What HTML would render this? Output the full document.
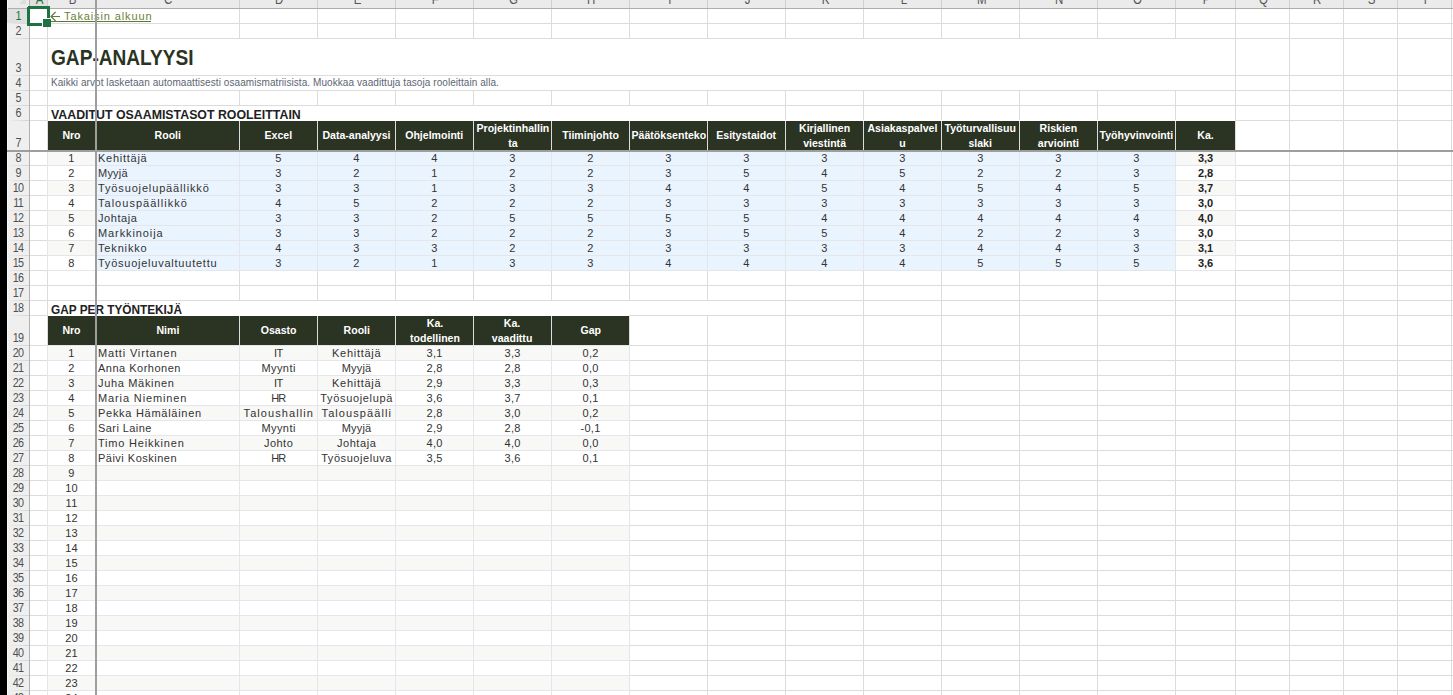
<!DOCTYPE html>
<html><head><meta charset="utf-8"><title>GAP-analyysi</title><style>
html,body{margin:0;padding:0;background:#fff;}
body{width:1453px;height:695px;overflow:hidden;position:relative;font-family:"Liberation Sans", sans-serif;}
#s{position:absolute;left:0;top:0;width:1453px;height:695px;overflow:hidden;background:#fff;}
#s>div{position:absolute;}
.t{white-space:nowrap;}
.h{display:flex;align-items:center;justify-content:center;text-align:center;color:#fff;font-weight:700;font-size:11px;line-height:15px;white-space:nowrap;}
.h span{display:inline-block;transform:scaleX(.96);}
.rn{left:7px;width:22px;height:15px;}
.rn span{position:absolute;left:50%;bottom:1px;font-size:48px;line-height:60px;letter-spacing:-3px;white-space:nowrap;transform:translateX(-50%) translateX(.1px) scale(.225,.25);transform-origin:50% 100%;}
</style></head><body><div id="s">
<div style="left:48px;top:151px;width:47px;height:14px;background:#f8f8f6;"></div>
<div style="left:1176px;top:151px;width:59px;height:14px;background:#f8f8f6;"></div>
<div style="left:96px;top:151px;width:1079px;height:14px;background:#eaf4ff;"></div>
<div style="left:96px;top:166px;width:1079px;height:14px;background:#eaf4ff;"></div>
<div style="left:48px;top:181px;width:47px;height:14px;background:#f8f8f6;"></div>
<div style="left:1176px;top:181px;width:59px;height:14px;background:#f8f8f6;"></div>
<div style="left:96px;top:181px;width:1079px;height:14px;background:#eaf4ff;"></div>
<div style="left:96px;top:196px;width:1079px;height:14px;background:#eaf4ff;"></div>
<div style="left:48px;top:211px;width:47px;height:14px;background:#f8f8f6;"></div>
<div style="left:1176px;top:211px;width:59px;height:14px;background:#f8f8f6;"></div>
<div style="left:96px;top:211px;width:1079px;height:14px;background:#eaf4ff;"></div>
<div style="left:96px;top:226px;width:1079px;height:14px;background:#eaf4ff;"></div>
<div style="left:48px;top:241px;width:47px;height:14px;background:#f8f8f6;"></div>
<div style="left:1176px;top:241px;width:59px;height:14px;background:#f8f8f6;"></div>
<div style="left:96px;top:241px;width:1079px;height:14px;background:#eaf4ff;"></div>
<div style="left:96px;top:256px;width:1079px;height:14px;background:#eaf4ff;"></div>
<div style="left:48px;top:346px;width:581px;height:14px;background:#f8f8f6;"></div>
<div style="left:48px;top:376px;width:581px;height:14px;background:#f8f8f6;"></div>
<div style="left:48px;top:406px;width:581px;height:14px;background:#f8f8f6;"></div>
<div style="left:48px;top:436px;width:581px;height:14px;background:#f8f8f6;"></div>
<div style="left:48px;top:466px;width:581px;height:14px;background:#f8f8f6;"></div>
<div style="left:48px;top:496px;width:581px;height:14px;background:#f8f8f6;"></div>
<div style="left:48px;top:526px;width:581px;height:14px;background:#f8f8f6;"></div>
<div style="left:48px;top:556px;width:581px;height:14px;background:#f8f8f6;"></div>
<div style="left:48px;top:586px;width:581px;height:14px;background:#f8f8f6;"></div>
<div style="left:48px;top:616px;width:581px;height:14px;background:#f8f8f6;"></div>
<div style="left:48px;top:646px;width:581px;height:14px;background:#f8f8f6;"></div>
<div style="left:48px;top:676px;width:581px;height:14px;background:#f8f8f6;"></div>
<div style="left:47px;top:9px;width:1px;height:695px;background:#dcdcdc;"></div>
<div style="left:95px;top:9px;width:1px;height:695px;background:#dcdcdc;"></div>
<div style="left:239px;top:9px;width:1px;height:695px;background:#dcdcdc;"></div>
<div style="left:317px;top:9px;width:1px;height:695px;background:#dcdcdc;"></div>
<div style="left:395px;top:9px;width:1px;height:695px;background:#dcdcdc;"></div>
<div style="left:473px;top:9px;width:1px;height:695px;background:#dcdcdc;"></div>
<div style="left:551px;top:9px;width:1px;height:695px;background:#dcdcdc;"></div>
<div style="left:629px;top:9px;width:1px;height:695px;background:#dcdcdc;"></div>
<div style="left:707px;top:9px;width:1px;height:695px;background:#dcdcdc;"></div>
<div style="left:785px;top:9px;width:1px;height:695px;background:#dcdcdc;"></div>
<div style="left:863px;top:9px;width:1px;height:695px;background:#dcdcdc;"></div>
<div style="left:941px;top:9px;width:1px;height:695px;background:#dcdcdc;"></div>
<div style="left:1019px;top:9px;width:1px;height:695px;background:#dcdcdc;"></div>
<div style="left:1097px;top:9px;width:1px;height:695px;background:#dcdcdc;"></div>
<div style="left:1175px;top:9px;width:1px;height:695px;background:#dcdcdc;"></div>
<div style="left:1235px;top:9px;width:1px;height:695px;background:#dcdcdc;"></div>
<div style="left:1289px;top:9px;width:1px;height:695px;background:#dcdcdc;"></div>
<div style="left:1343px;top:9px;width:1px;height:695px;background:#dcdcdc;"></div>
<div style="left:1397px;top:9px;width:1px;height:695px;background:#dcdcdc;"></div>
<div style="left:1451px;top:9px;width:1px;height:695px;background:#dcdcdc;"></div>
<div style="left:30px;top:23px;width:1453px;height:1px;background:#dcdcdc;"></div>
<div style="left:30px;top:38px;width:1453px;height:1px;background:#dcdcdc;"></div>
<div style="left:30px;top:75px;width:1453px;height:1px;background:#dcdcdc;"></div>
<div style="left:30px;top:90px;width:1453px;height:1px;background:#dcdcdc;"></div>
<div style="left:30px;top:105px;width:1453px;height:1px;background:#dcdcdc;"></div>
<div style="left:30px;top:120px;width:1453px;height:1px;background:#dcdcdc;"></div>
<div style="left:30px;top:150px;width:1453px;height:1px;background:#dcdcdc;"></div>
<div style="left:30px;top:165px;width:1453px;height:1px;background:#dcdcdc;"></div>
<div style="left:30px;top:180px;width:1453px;height:1px;background:#dcdcdc;"></div>
<div style="left:30px;top:195px;width:1453px;height:1px;background:#dcdcdc;"></div>
<div style="left:30px;top:210px;width:1453px;height:1px;background:#dcdcdc;"></div>
<div style="left:30px;top:225px;width:1453px;height:1px;background:#dcdcdc;"></div>
<div style="left:30px;top:240px;width:1453px;height:1px;background:#dcdcdc;"></div>
<div style="left:30px;top:255px;width:1453px;height:1px;background:#dcdcdc;"></div>
<div style="left:30px;top:270px;width:1453px;height:1px;background:#dcdcdc;"></div>
<div style="left:30px;top:285px;width:1453px;height:1px;background:#dcdcdc;"></div>
<div style="left:30px;top:300px;width:1453px;height:1px;background:#dcdcdc;"></div>
<div style="left:30px;top:315px;width:1453px;height:1px;background:#dcdcdc;"></div>
<div style="left:30px;top:345px;width:1453px;height:1px;background:#dcdcdc;"></div>
<div style="left:30px;top:360px;width:1453px;height:1px;background:#dcdcdc;"></div>
<div style="left:30px;top:375px;width:1453px;height:1px;background:#dcdcdc;"></div>
<div style="left:30px;top:390px;width:1453px;height:1px;background:#dcdcdc;"></div>
<div style="left:30px;top:405px;width:1453px;height:1px;background:#dcdcdc;"></div>
<div style="left:30px;top:420px;width:1453px;height:1px;background:#dcdcdc;"></div>
<div style="left:30px;top:435px;width:1453px;height:1px;background:#dcdcdc;"></div>
<div style="left:30px;top:450px;width:1453px;height:1px;background:#dcdcdc;"></div>
<div style="left:30px;top:465px;width:1453px;height:1px;background:#dcdcdc;"></div>
<div style="left:30px;top:480px;width:1453px;height:1px;background:#dcdcdc;"></div>
<div style="left:30px;top:495px;width:1453px;height:1px;background:#dcdcdc;"></div>
<div style="left:30px;top:510px;width:1453px;height:1px;background:#dcdcdc;"></div>
<div style="left:30px;top:525px;width:1453px;height:1px;background:#dcdcdc;"></div>
<div style="left:30px;top:540px;width:1453px;height:1px;background:#dcdcdc;"></div>
<div style="left:30px;top:555px;width:1453px;height:1px;background:#dcdcdc;"></div>
<div style="left:30px;top:570px;width:1453px;height:1px;background:#dcdcdc;"></div>
<div style="left:30px;top:585px;width:1453px;height:1px;background:#dcdcdc;"></div>
<div style="left:30px;top:600px;width:1453px;height:1px;background:#dcdcdc;"></div>
<div style="left:30px;top:615px;width:1453px;height:1px;background:#dcdcdc;"></div>
<div style="left:30px;top:630px;width:1453px;height:1px;background:#dcdcdc;"></div>
<div style="left:30px;top:645px;width:1453px;height:1px;background:#dcdcdc;"></div>
<div style="left:30px;top:660px;width:1453px;height:1px;background:#dcdcdc;"></div>
<div style="left:30px;top:675px;width:1453px;height:1px;background:#dcdcdc;"></div>
<div style="left:30px;top:690px;width:1453px;height:1px;background:#dcdcdc;"></div>
<div style="left:30px;top:705px;width:1453px;height:1px;background:#dcdcdc;"></div>
<div style="left:30px;top:720px;width:1453px;height:1px;background:#dcdcdc;"></div>
<div style="left:47px;top:150px;width:1px;height:121px;background:#e4e6ea;"></div>
<div style="left:95px;top:150px;width:1px;height:121px;background:#e4e6ea;"></div>
<div style="left:239px;top:150px;width:1px;height:121px;background:#e4e6ea;"></div>
<div style="left:317px;top:150px;width:1px;height:121px;background:#e4e6ea;"></div>
<div style="left:395px;top:150px;width:1px;height:121px;background:#e4e6ea;"></div>
<div style="left:473px;top:150px;width:1px;height:121px;background:#e4e6ea;"></div>
<div style="left:551px;top:150px;width:1px;height:121px;background:#e4e6ea;"></div>
<div style="left:629px;top:150px;width:1px;height:121px;background:#e4e6ea;"></div>
<div style="left:707px;top:150px;width:1px;height:121px;background:#e4e6ea;"></div>
<div style="left:785px;top:150px;width:1px;height:121px;background:#e4e6ea;"></div>
<div style="left:863px;top:150px;width:1px;height:121px;background:#e4e6ea;"></div>
<div style="left:941px;top:150px;width:1px;height:121px;background:#e4e6ea;"></div>
<div style="left:1019px;top:150px;width:1px;height:121px;background:#e4e6ea;"></div>
<div style="left:1097px;top:150px;width:1px;height:121px;background:#e4e6ea;"></div>
<div style="left:1175px;top:150px;width:1px;height:121px;background:#e4e6ea;"></div>
<div style="left:1235px;top:150px;width:1px;height:121px;background:#e4e6ea;"></div>
<div style="left:47px;top:150px;width:1189px;height:1px;background:#e4e6ea;"></div>
<div style="left:47px;top:165px;width:1189px;height:1px;background:#e4e6ea;"></div>
<div style="left:47px;top:180px;width:1189px;height:1px;background:#e4e6ea;"></div>
<div style="left:47px;top:195px;width:1189px;height:1px;background:#e4e6ea;"></div>
<div style="left:47px;top:210px;width:1189px;height:1px;background:#e4e6ea;"></div>
<div style="left:47px;top:225px;width:1189px;height:1px;background:#e4e6ea;"></div>
<div style="left:47px;top:240px;width:1189px;height:1px;background:#e4e6ea;"></div>
<div style="left:47px;top:255px;width:1189px;height:1px;background:#e4e6ea;"></div>
<div style="left:47px;top:270px;width:1189px;height:1px;background:#e4e6ea;"></div>
<div style="left:47px;top:345px;width:1px;height:351px;background:#e4e6ea;"></div>
<div style="left:95px;top:345px;width:1px;height:351px;background:#e4e6ea;"></div>
<div style="left:239px;top:345px;width:1px;height:351px;background:#e4e6ea;"></div>
<div style="left:317px;top:345px;width:1px;height:351px;background:#e4e6ea;"></div>
<div style="left:395px;top:345px;width:1px;height:351px;background:#e4e6ea;"></div>
<div style="left:473px;top:345px;width:1px;height:351px;background:#e4e6ea;"></div>
<div style="left:551px;top:345px;width:1px;height:351px;background:#e4e6ea;"></div>
<div style="left:629px;top:345px;width:1px;height:351px;background:#e4e6ea;"></div>
<div style="left:47px;top:345px;width:583px;height:1px;background:#e4e6ea;"></div>
<div style="left:47px;top:360px;width:583px;height:1px;background:#e4e6ea;"></div>
<div style="left:47px;top:375px;width:583px;height:1px;background:#e4e6ea;"></div>
<div style="left:47px;top:390px;width:583px;height:1px;background:#e4e6ea;"></div>
<div style="left:47px;top:405px;width:583px;height:1px;background:#e4e6ea;"></div>
<div style="left:47px;top:420px;width:583px;height:1px;background:#e4e6ea;"></div>
<div style="left:47px;top:435px;width:583px;height:1px;background:#e4e6ea;"></div>
<div style="left:47px;top:450px;width:583px;height:1px;background:#e4e6ea;"></div>
<div style="left:47px;top:465px;width:583px;height:1px;background:#e4e6ea;"></div>
<div style="left:47px;top:480px;width:583px;height:1px;background:#e4e6ea;"></div>
<div style="left:47px;top:495px;width:583px;height:1px;background:#e4e6ea;"></div>
<div style="left:47px;top:510px;width:583px;height:1px;background:#e4e6ea;"></div>
<div style="left:47px;top:525px;width:583px;height:1px;background:#e4e6ea;"></div>
<div style="left:47px;top:540px;width:583px;height:1px;background:#e4e6ea;"></div>
<div style="left:47px;top:555px;width:583px;height:1px;background:#e4e6ea;"></div>
<div style="left:47px;top:570px;width:583px;height:1px;background:#e4e6ea;"></div>
<div style="left:47px;top:585px;width:583px;height:1px;background:#e4e6ea;"></div>
<div style="left:47px;top:600px;width:583px;height:1px;background:#e4e6ea;"></div>
<div style="left:47px;top:615px;width:583px;height:1px;background:#e4e6ea;"></div>
<div style="left:47px;top:630px;width:583px;height:1px;background:#e4e6ea;"></div>
<div style="left:47px;top:645px;width:583px;height:1px;background:#e4e6ea;"></div>
<div style="left:47px;top:660px;width:583px;height:1px;background:#e4e6ea;"></div>
<div style="left:47px;top:675px;width:583px;height:1px;background:#e4e6ea;"></div>
<div style="left:47px;top:690px;width:583px;height:1px;background:#e4e6ea;"></div>
<div style="left:48px;top:39px;width:1187px;height:36px;background:#fff;"></div>
<div style="left:48px;top:76px;width:1187px;height:14px;background:#fff;"></div>
<div style="left:48px;top:106px;width:737px;height:14px;background:#fff;"></div>
<div style="left:48px;top:301px;width:737px;height:14px;background:#fff;"></div>
<div style="left:48px;top:120px;width:1187px;height:1px;background:#fff;"></div>
<div style="left:48px;top:121px;width:47px;height:29px;background:#2b3423;"></div>
<div style="left:96px;top:121px;width:143px;height:29px;background:#2b3423;"></div>
<div style="left:240px;top:121px;width:77px;height:29px;background:#2b3423;"></div>
<div style="left:318px;top:121px;width:77px;height:29px;background:#2b3423;"></div>
<div style="left:396px;top:121px;width:77px;height:29px;background:#2b3423;"></div>
<div style="left:474px;top:121px;width:77px;height:29px;background:#2b3423;"></div>
<div style="left:552px;top:121px;width:77px;height:29px;background:#2b3423;"></div>
<div style="left:630px;top:121px;width:77px;height:29px;background:#2b3423;"></div>
<div style="left:708px;top:121px;width:77px;height:29px;background:#2b3423;"></div>
<div style="left:786px;top:121px;width:77px;height:29px;background:#2b3423;"></div>
<div style="left:864px;top:121px;width:77px;height:29px;background:#2b3423;"></div>
<div style="left:942px;top:121px;width:77px;height:29px;background:#2b3423;"></div>
<div style="left:1020px;top:121px;width:77px;height:29px;background:#2b3423;"></div>
<div style="left:1098px;top:121px;width:77px;height:29px;background:#2b3423;"></div>
<div style="left:1176px;top:121px;width:59px;height:29px;background:#2b3423;"></div>
<div style="left:48px;top:315px;width:581px;height:1px;background:#fff;"></div>
<div style="left:48px;top:316px;width:47px;height:29px;background:#2b3423;"></div>
<div style="left:96px;top:316px;width:143px;height:29px;background:#2b3423;"></div>
<div style="left:240px;top:316px;width:77px;height:29px;background:#2b3423;"></div>
<div style="left:318px;top:316px;width:77px;height:29px;background:#2b3423;"></div>
<div style="left:396px;top:316px;width:77px;height:29px;background:#2b3423;"></div>
<div style="left:474px;top:316px;width:77px;height:29px;background:#2b3423;"></div>
<div style="left:552px;top:316px;width:77px;height:29px;background:#2b3423;"></div>
<svg style="position:absolute;left:50px;top:11px" width="11" height="11" viewBox="0 0 11 11"><path d="M1 5.5H10M5.6 1L1 5.5L5.6 10" fill="none" stroke="#61793a" stroke-width="1.15"/></svg>
<div class="t" style="left:64px;top:9px;height:14px;line-height:15px;font-size:11px;letter-spacing:.88px;color:#6a7f3d;">Takaisin alkuun</div>
<div style="left:51px;top:21px;width:100px;height:1px;background:#5a7a3a;"></div>
<div class="t" style="left:51px;top:46px;font-size:22px;line-height:24px;font-weight:700;color:#2b3423;transform-origin:0 0;transform:scaleX(.868);">GAP-ANALYYSI</div>
<div class="t" style="left:51px;top:76px;font-size:10px;line-height:14px;letter-spacing:.07px;color:#5d6573;">Kaikki arvot lasketaan automaattisesti osaamismatriisista. Muokkaa vaadittuja tasoja rooleittain alla.</div>
<div class="t" style="left:51px;top:107px;font-size:13px;line-height:15px;font-weight:700;color:#222;transform-origin:0 0;transform:scaleX(.95);">VAADITUT OSAAMISTASOT ROOLEITTAIN</div>
<div class="t" style="left:51px;top:302px;font-size:13px;line-height:15px;font-weight:700;color:#222;transform-origin:0 0;transform:scaleX(.908);">GAP PER TYÖNTEKIJÄ</div>
<div class="h" style="left:38px;top:121px;width:67px;height:29px;"><span>Nro</span></div>
<div class="h" style="left:86px;top:121px;width:163px;height:29px;"><span>Rooli</span></div>
<div class="h" style="left:230px;top:121px;width:97px;height:29px;"><span>Excel</span></div>
<div class="h" style="left:308px;top:121px;width:97px;height:29px;"><span>Data-analyysi</span></div>
<div class="h" style="left:386px;top:121px;width:97px;height:29px;"><span>Ohjelmointi</span></div>
<div class="h" style="left:464px;top:121px;width:97px;height:29px;"><span>Projektinhallin<br>ta</span></div>
<div class="h" style="left:542px;top:121px;width:97px;height:29px;"><span>Tiiminjohto</span></div>
<div class="h" style="left:620px;top:121px;width:97px;height:29px;"><span>Päätöksenteko</span></div>
<div class="h" style="left:698px;top:121px;width:97px;height:29px;"><span>Esitystaidot</span></div>
<div class="h" style="left:776px;top:121px;width:97px;height:29px;"><span>Kirjallinen<br>viestintä</span></div>
<div class="h" style="left:854px;top:121px;width:97px;height:29px;"><span>Asiakaspalvel<br>u</span></div>
<div class="h" style="left:932px;top:121px;width:97px;height:29px;"><span>Työturvallisuu<br>slaki</span></div>
<div class="h" style="left:1010px;top:121px;width:97px;height:29px;"><span>Riskien<br>arviointi</span></div>
<div class="h" style="left:1088px;top:121px;width:97px;height:29px;"><span>Työhyvinvointi</span></div>
<div class="h" style="left:1166px;top:121px;width:79px;height:29px;"><span>Ka.</span></div>
<div class="h" style="left:38px;top:316px;width:67px;height:29px;"><span>Nro</span></div>
<div class="h" style="left:86px;top:316px;width:163px;height:29px;"><span>Nimi</span></div>
<div class="h" style="left:230px;top:316px;width:97px;height:29px;"><span>Osasto</span></div>
<div class="h" style="left:308px;top:316px;width:97px;height:29px;"><span>Rooli</span></div>
<div class="h" style="left:386px;top:316px;width:97px;height:29px;"><span>Ka.<br>todellinen</span></div>
<div class="h" style="left:464px;top:316px;width:97px;height:29px;"><span>Ka.<br>vaadittu</span></div>
<div class="h" style="left:542px;top:316px;width:97px;height:29px;"><span>Gap</span></div>
<div class="t" style="left:48px;top:151px;width:47px;height:14px;line-height:15px;box-sizing:border-box;overflow:hidden;font-size:11px;letter-spacing:.6px;color:#333;text-align:center;letter-spacing:.3px;text-indent:.15px;">1</div>
<div class="t" style="left:96px;top:151px;width:143px;height:14px;line-height:15px;box-sizing:border-box;overflow:hidden;font-size:11px;letter-spacing:.6px;color:#333;text-align:left;letter-spacing:0.736px;padding-left:2px;">Kehittäjä</div>
<div class="t" style="left:240px;top:151px;width:77px;height:14px;line-height:15px;box-sizing:border-box;overflow:hidden;font-size:11px;letter-spacing:.6px;color:#333;text-align:center;letter-spacing:.3px;text-indent:.15px;">5</div>
<div class="t" style="left:318px;top:151px;width:77px;height:14px;line-height:15px;box-sizing:border-box;overflow:hidden;font-size:11px;letter-spacing:.6px;color:#333;text-align:center;letter-spacing:.3px;text-indent:.15px;">4</div>
<div class="t" style="left:396px;top:151px;width:77px;height:14px;line-height:15px;box-sizing:border-box;overflow:hidden;font-size:11px;letter-spacing:.6px;color:#333;text-align:center;letter-spacing:.3px;text-indent:.15px;">4</div>
<div class="t" style="left:474px;top:151px;width:77px;height:14px;line-height:15px;box-sizing:border-box;overflow:hidden;font-size:11px;letter-spacing:.6px;color:#333;text-align:center;letter-spacing:.3px;text-indent:.15px;">3</div>
<div class="t" style="left:552px;top:151px;width:77px;height:14px;line-height:15px;box-sizing:border-box;overflow:hidden;font-size:11px;letter-spacing:.6px;color:#333;text-align:center;letter-spacing:.3px;text-indent:.15px;">2</div>
<div class="t" style="left:630px;top:151px;width:77px;height:14px;line-height:15px;box-sizing:border-box;overflow:hidden;font-size:11px;letter-spacing:.6px;color:#333;text-align:center;letter-spacing:.3px;text-indent:.15px;">3</div>
<div class="t" style="left:708px;top:151px;width:77px;height:14px;line-height:15px;box-sizing:border-box;overflow:hidden;font-size:11px;letter-spacing:.6px;color:#333;text-align:center;letter-spacing:.3px;text-indent:.15px;">3</div>
<div class="t" style="left:786px;top:151px;width:77px;height:14px;line-height:15px;box-sizing:border-box;overflow:hidden;font-size:11px;letter-spacing:.6px;color:#333;text-align:center;letter-spacing:.3px;text-indent:.15px;">3</div>
<div class="t" style="left:864px;top:151px;width:77px;height:14px;line-height:15px;box-sizing:border-box;overflow:hidden;font-size:11px;letter-spacing:.6px;color:#333;text-align:center;letter-spacing:.3px;text-indent:.15px;">3</div>
<div class="t" style="left:942px;top:151px;width:77px;height:14px;line-height:15px;box-sizing:border-box;overflow:hidden;font-size:11px;letter-spacing:.6px;color:#333;text-align:center;letter-spacing:.3px;text-indent:.15px;">3</div>
<div class="t" style="left:1020px;top:151px;width:77px;height:14px;line-height:15px;box-sizing:border-box;overflow:hidden;font-size:11px;letter-spacing:.6px;color:#333;text-align:center;letter-spacing:.3px;text-indent:.15px;">3</div>
<div class="t" style="left:1098px;top:151px;width:77px;height:14px;line-height:15px;box-sizing:border-box;overflow:hidden;font-size:11px;letter-spacing:.6px;color:#333;text-align:center;letter-spacing:.3px;text-indent:.15px;">3</div>
<div class="t" style="left:1176px;top:151px;width:59px;height:14px;line-height:15px;box-sizing:border-box;overflow:hidden;font-size:11px;font-weight:700;color:#222;letter-spacing:-.15px;text-align:center;">3,3</div>
<div class="t" style="left:48px;top:166px;width:47px;height:14px;line-height:15px;box-sizing:border-box;overflow:hidden;font-size:11px;letter-spacing:.6px;color:#333;text-align:center;letter-spacing:.3px;text-indent:.15px;">2</div>
<div class="t" style="left:96px;top:166px;width:143px;height:14px;line-height:15px;box-sizing:border-box;overflow:hidden;font-size:11px;letter-spacing:.6px;color:#333;text-align:left;letter-spacing:0.216px;padding-left:2px;">Myyjä</div>
<div class="t" style="left:240px;top:166px;width:77px;height:14px;line-height:15px;box-sizing:border-box;overflow:hidden;font-size:11px;letter-spacing:.6px;color:#333;text-align:center;letter-spacing:.3px;text-indent:.15px;">3</div>
<div class="t" style="left:318px;top:166px;width:77px;height:14px;line-height:15px;box-sizing:border-box;overflow:hidden;font-size:11px;letter-spacing:.6px;color:#333;text-align:center;letter-spacing:.3px;text-indent:.15px;">2</div>
<div class="t" style="left:396px;top:166px;width:77px;height:14px;line-height:15px;box-sizing:border-box;overflow:hidden;font-size:11px;letter-spacing:.6px;color:#333;text-align:center;letter-spacing:.3px;text-indent:.15px;">1</div>
<div class="t" style="left:474px;top:166px;width:77px;height:14px;line-height:15px;box-sizing:border-box;overflow:hidden;font-size:11px;letter-spacing:.6px;color:#333;text-align:center;letter-spacing:.3px;text-indent:.15px;">2</div>
<div class="t" style="left:552px;top:166px;width:77px;height:14px;line-height:15px;box-sizing:border-box;overflow:hidden;font-size:11px;letter-spacing:.6px;color:#333;text-align:center;letter-spacing:.3px;text-indent:.15px;">2</div>
<div class="t" style="left:630px;top:166px;width:77px;height:14px;line-height:15px;box-sizing:border-box;overflow:hidden;font-size:11px;letter-spacing:.6px;color:#333;text-align:center;letter-spacing:.3px;text-indent:.15px;">3</div>
<div class="t" style="left:708px;top:166px;width:77px;height:14px;line-height:15px;box-sizing:border-box;overflow:hidden;font-size:11px;letter-spacing:.6px;color:#333;text-align:center;letter-spacing:.3px;text-indent:.15px;">5</div>
<div class="t" style="left:786px;top:166px;width:77px;height:14px;line-height:15px;box-sizing:border-box;overflow:hidden;font-size:11px;letter-spacing:.6px;color:#333;text-align:center;letter-spacing:.3px;text-indent:.15px;">4</div>
<div class="t" style="left:864px;top:166px;width:77px;height:14px;line-height:15px;box-sizing:border-box;overflow:hidden;font-size:11px;letter-spacing:.6px;color:#333;text-align:center;letter-spacing:.3px;text-indent:.15px;">5</div>
<div class="t" style="left:942px;top:166px;width:77px;height:14px;line-height:15px;box-sizing:border-box;overflow:hidden;font-size:11px;letter-spacing:.6px;color:#333;text-align:center;letter-spacing:.3px;text-indent:.15px;">2</div>
<div class="t" style="left:1020px;top:166px;width:77px;height:14px;line-height:15px;box-sizing:border-box;overflow:hidden;font-size:11px;letter-spacing:.6px;color:#333;text-align:center;letter-spacing:.3px;text-indent:.15px;">2</div>
<div class="t" style="left:1098px;top:166px;width:77px;height:14px;line-height:15px;box-sizing:border-box;overflow:hidden;font-size:11px;letter-spacing:.6px;color:#333;text-align:center;letter-spacing:.3px;text-indent:.15px;">3</div>
<div class="t" style="left:1176px;top:166px;width:59px;height:14px;line-height:15px;box-sizing:border-box;overflow:hidden;font-size:11px;font-weight:700;color:#222;letter-spacing:-.15px;text-align:center;">2,8</div>
<div class="t" style="left:48px;top:181px;width:47px;height:14px;line-height:15px;box-sizing:border-box;overflow:hidden;font-size:11px;letter-spacing:.6px;color:#333;text-align:center;letter-spacing:.3px;text-indent:.15px;">3</div>
<div class="t" style="left:96px;top:181px;width:143px;height:14px;line-height:15px;box-sizing:border-box;overflow:hidden;font-size:11px;letter-spacing:.6px;color:#333;text-align:left;letter-spacing:0.856px;padding-left:2px;">Työsuojelupäällikkö</div>
<div class="t" style="left:240px;top:181px;width:77px;height:14px;line-height:15px;box-sizing:border-box;overflow:hidden;font-size:11px;letter-spacing:.6px;color:#333;text-align:center;letter-spacing:.3px;text-indent:.15px;">3</div>
<div class="t" style="left:318px;top:181px;width:77px;height:14px;line-height:15px;box-sizing:border-box;overflow:hidden;font-size:11px;letter-spacing:.6px;color:#333;text-align:center;letter-spacing:.3px;text-indent:.15px;">3</div>
<div class="t" style="left:396px;top:181px;width:77px;height:14px;line-height:15px;box-sizing:border-box;overflow:hidden;font-size:11px;letter-spacing:.6px;color:#333;text-align:center;letter-spacing:.3px;text-indent:.15px;">1</div>
<div class="t" style="left:474px;top:181px;width:77px;height:14px;line-height:15px;box-sizing:border-box;overflow:hidden;font-size:11px;letter-spacing:.6px;color:#333;text-align:center;letter-spacing:.3px;text-indent:.15px;">3</div>
<div class="t" style="left:552px;top:181px;width:77px;height:14px;line-height:15px;box-sizing:border-box;overflow:hidden;font-size:11px;letter-spacing:.6px;color:#333;text-align:center;letter-spacing:.3px;text-indent:.15px;">3</div>
<div class="t" style="left:630px;top:181px;width:77px;height:14px;line-height:15px;box-sizing:border-box;overflow:hidden;font-size:11px;letter-spacing:.6px;color:#333;text-align:center;letter-spacing:.3px;text-indent:.15px;">4</div>
<div class="t" style="left:708px;top:181px;width:77px;height:14px;line-height:15px;box-sizing:border-box;overflow:hidden;font-size:11px;letter-spacing:.6px;color:#333;text-align:center;letter-spacing:.3px;text-indent:.15px;">4</div>
<div class="t" style="left:786px;top:181px;width:77px;height:14px;line-height:15px;box-sizing:border-box;overflow:hidden;font-size:11px;letter-spacing:.6px;color:#333;text-align:center;letter-spacing:.3px;text-indent:.15px;">5</div>
<div class="t" style="left:864px;top:181px;width:77px;height:14px;line-height:15px;box-sizing:border-box;overflow:hidden;font-size:11px;letter-spacing:.6px;color:#333;text-align:center;letter-spacing:.3px;text-indent:.15px;">4</div>
<div class="t" style="left:942px;top:181px;width:77px;height:14px;line-height:15px;box-sizing:border-box;overflow:hidden;font-size:11px;letter-spacing:.6px;color:#333;text-align:center;letter-spacing:.3px;text-indent:.15px;">5</div>
<div class="t" style="left:1020px;top:181px;width:77px;height:14px;line-height:15px;box-sizing:border-box;overflow:hidden;font-size:11px;letter-spacing:.6px;color:#333;text-align:center;letter-spacing:.3px;text-indent:.15px;">4</div>
<div class="t" style="left:1098px;top:181px;width:77px;height:14px;line-height:15px;box-sizing:border-box;overflow:hidden;font-size:11px;letter-spacing:.6px;color:#333;text-align:center;letter-spacing:.3px;text-indent:.15px;">5</div>
<div class="t" style="left:1176px;top:181px;width:59px;height:14px;line-height:15px;box-sizing:border-box;overflow:hidden;font-size:11px;font-weight:700;color:#222;letter-spacing:-.15px;text-align:center;">3,7</div>
<div class="t" style="left:48px;top:196px;width:47px;height:14px;line-height:15px;box-sizing:border-box;overflow:hidden;font-size:11px;letter-spacing:.6px;color:#333;text-align:center;letter-spacing:.3px;text-indent:.15px;">4</div>
<div class="t" style="left:96px;top:196px;width:143px;height:14px;line-height:15px;box-sizing:border-box;overflow:hidden;font-size:11px;letter-spacing:.6px;color:#333;text-align:left;letter-spacing:1.021px;padding-left:2px;">Talouspäällikkö</div>
<div class="t" style="left:240px;top:196px;width:77px;height:14px;line-height:15px;box-sizing:border-box;overflow:hidden;font-size:11px;letter-spacing:.6px;color:#333;text-align:center;letter-spacing:.3px;text-indent:.15px;">4</div>
<div class="t" style="left:318px;top:196px;width:77px;height:14px;line-height:15px;box-sizing:border-box;overflow:hidden;font-size:11px;letter-spacing:.6px;color:#333;text-align:center;letter-spacing:.3px;text-indent:.15px;">5</div>
<div class="t" style="left:396px;top:196px;width:77px;height:14px;line-height:15px;box-sizing:border-box;overflow:hidden;font-size:11px;letter-spacing:.6px;color:#333;text-align:center;letter-spacing:.3px;text-indent:.15px;">2</div>
<div class="t" style="left:474px;top:196px;width:77px;height:14px;line-height:15px;box-sizing:border-box;overflow:hidden;font-size:11px;letter-spacing:.6px;color:#333;text-align:center;letter-spacing:.3px;text-indent:.15px;">2</div>
<div class="t" style="left:552px;top:196px;width:77px;height:14px;line-height:15px;box-sizing:border-box;overflow:hidden;font-size:11px;letter-spacing:.6px;color:#333;text-align:center;letter-spacing:.3px;text-indent:.15px;">2</div>
<div class="t" style="left:630px;top:196px;width:77px;height:14px;line-height:15px;box-sizing:border-box;overflow:hidden;font-size:11px;letter-spacing:.6px;color:#333;text-align:center;letter-spacing:.3px;text-indent:.15px;">3</div>
<div class="t" style="left:708px;top:196px;width:77px;height:14px;line-height:15px;box-sizing:border-box;overflow:hidden;font-size:11px;letter-spacing:.6px;color:#333;text-align:center;letter-spacing:.3px;text-indent:.15px;">3</div>
<div class="t" style="left:786px;top:196px;width:77px;height:14px;line-height:15px;box-sizing:border-box;overflow:hidden;font-size:11px;letter-spacing:.6px;color:#333;text-align:center;letter-spacing:.3px;text-indent:.15px;">3</div>
<div class="t" style="left:864px;top:196px;width:77px;height:14px;line-height:15px;box-sizing:border-box;overflow:hidden;font-size:11px;letter-spacing:.6px;color:#333;text-align:center;letter-spacing:.3px;text-indent:.15px;">3</div>
<div class="t" style="left:942px;top:196px;width:77px;height:14px;line-height:15px;box-sizing:border-box;overflow:hidden;font-size:11px;letter-spacing:.6px;color:#333;text-align:center;letter-spacing:.3px;text-indent:.15px;">3</div>
<div class="t" style="left:1020px;top:196px;width:77px;height:14px;line-height:15px;box-sizing:border-box;overflow:hidden;font-size:11px;letter-spacing:.6px;color:#333;text-align:center;letter-spacing:.3px;text-indent:.15px;">3</div>
<div class="t" style="left:1098px;top:196px;width:77px;height:14px;line-height:15px;box-sizing:border-box;overflow:hidden;font-size:11px;letter-spacing:.6px;color:#333;text-align:center;letter-spacing:.3px;text-indent:.15px;">3</div>
<div class="t" style="left:1176px;top:196px;width:59px;height:14px;line-height:15px;box-sizing:border-box;overflow:hidden;font-size:11px;font-weight:700;color:#222;letter-spacing:-.15px;text-align:center;">3,0</div>
<div class="t" style="left:48px;top:211px;width:47px;height:14px;line-height:15px;box-sizing:border-box;overflow:hidden;font-size:11px;letter-spacing:.6px;color:#333;text-align:center;letter-spacing:.3px;text-indent:.15px;">5</div>
<div class="t" style="left:96px;top:211px;width:143px;height:14px;line-height:15px;box-sizing:border-box;overflow:hidden;font-size:11px;letter-spacing:.6px;color:#333;text-align:left;letter-spacing:0.569px;padding-left:2px;">Johtaja</div>
<div class="t" style="left:240px;top:211px;width:77px;height:14px;line-height:15px;box-sizing:border-box;overflow:hidden;font-size:11px;letter-spacing:.6px;color:#333;text-align:center;letter-spacing:.3px;text-indent:.15px;">3</div>
<div class="t" style="left:318px;top:211px;width:77px;height:14px;line-height:15px;box-sizing:border-box;overflow:hidden;font-size:11px;letter-spacing:.6px;color:#333;text-align:center;letter-spacing:.3px;text-indent:.15px;">3</div>
<div class="t" style="left:396px;top:211px;width:77px;height:14px;line-height:15px;box-sizing:border-box;overflow:hidden;font-size:11px;letter-spacing:.6px;color:#333;text-align:center;letter-spacing:.3px;text-indent:.15px;">2</div>
<div class="t" style="left:474px;top:211px;width:77px;height:14px;line-height:15px;box-sizing:border-box;overflow:hidden;font-size:11px;letter-spacing:.6px;color:#333;text-align:center;letter-spacing:.3px;text-indent:.15px;">5</div>
<div class="t" style="left:552px;top:211px;width:77px;height:14px;line-height:15px;box-sizing:border-box;overflow:hidden;font-size:11px;letter-spacing:.6px;color:#333;text-align:center;letter-spacing:.3px;text-indent:.15px;">5</div>
<div class="t" style="left:630px;top:211px;width:77px;height:14px;line-height:15px;box-sizing:border-box;overflow:hidden;font-size:11px;letter-spacing:.6px;color:#333;text-align:center;letter-spacing:.3px;text-indent:.15px;">5</div>
<div class="t" style="left:708px;top:211px;width:77px;height:14px;line-height:15px;box-sizing:border-box;overflow:hidden;font-size:11px;letter-spacing:.6px;color:#333;text-align:center;letter-spacing:.3px;text-indent:.15px;">5</div>
<div class="t" style="left:786px;top:211px;width:77px;height:14px;line-height:15px;box-sizing:border-box;overflow:hidden;font-size:11px;letter-spacing:.6px;color:#333;text-align:center;letter-spacing:.3px;text-indent:.15px;">4</div>
<div class="t" style="left:864px;top:211px;width:77px;height:14px;line-height:15px;box-sizing:border-box;overflow:hidden;font-size:11px;letter-spacing:.6px;color:#333;text-align:center;letter-spacing:.3px;text-indent:.15px;">4</div>
<div class="t" style="left:942px;top:211px;width:77px;height:14px;line-height:15px;box-sizing:border-box;overflow:hidden;font-size:11px;letter-spacing:.6px;color:#333;text-align:center;letter-spacing:.3px;text-indent:.15px;">4</div>
<div class="t" style="left:1020px;top:211px;width:77px;height:14px;line-height:15px;box-sizing:border-box;overflow:hidden;font-size:11px;letter-spacing:.6px;color:#333;text-align:center;letter-spacing:.3px;text-indent:.15px;">4</div>
<div class="t" style="left:1098px;top:211px;width:77px;height:14px;line-height:15px;box-sizing:border-box;overflow:hidden;font-size:11px;letter-spacing:.6px;color:#333;text-align:center;letter-spacing:.3px;text-indent:.15px;">4</div>
<div class="t" style="left:1176px;top:211px;width:59px;height:14px;line-height:15px;box-sizing:border-box;overflow:hidden;font-size:11px;font-weight:700;color:#222;letter-spacing:-.15px;text-align:center;">4,0</div>
<div class="t" style="left:48px;top:226px;width:47px;height:14px;line-height:15px;box-sizing:border-box;overflow:hidden;font-size:11px;letter-spacing:.6px;color:#333;text-align:center;letter-spacing:.3px;text-indent:.15px;">6</div>
<div class="t" style="left:96px;top:226px;width:143px;height:14px;line-height:15px;box-sizing:border-box;overflow:hidden;font-size:11px;letter-spacing:.6px;color:#333;text-align:left;letter-spacing:0.896px;padding-left:2px;">Markkinoija</div>
<div class="t" style="left:240px;top:226px;width:77px;height:14px;line-height:15px;box-sizing:border-box;overflow:hidden;font-size:11px;letter-spacing:.6px;color:#333;text-align:center;letter-spacing:.3px;text-indent:.15px;">3</div>
<div class="t" style="left:318px;top:226px;width:77px;height:14px;line-height:15px;box-sizing:border-box;overflow:hidden;font-size:11px;letter-spacing:.6px;color:#333;text-align:center;letter-spacing:.3px;text-indent:.15px;">3</div>
<div class="t" style="left:396px;top:226px;width:77px;height:14px;line-height:15px;box-sizing:border-box;overflow:hidden;font-size:11px;letter-spacing:.6px;color:#333;text-align:center;letter-spacing:.3px;text-indent:.15px;">2</div>
<div class="t" style="left:474px;top:226px;width:77px;height:14px;line-height:15px;box-sizing:border-box;overflow:hidden;font-size:11px;letter-spacing:.6px;color:#333;text-align:center;letter-spacing:.3px;text-indent:.15px;">2</div>
<div class="t" style="left:552px;top:226px;width:77px;height:14px;line-height:15px;box-sizing:border-box;overflow:hidden;font-size:11px;letter-spacing:.6px;color:#333;text-align:center;letter-spacing:.3px;text-indent:.15px;">2</div>
<div class="t" style="left:630px;top:226px;width:77px;height:14px;line-height:15px;box-sizing:border-box;overflow:hidden;font-size:11px;letter-spacing:.6px;color:#333;text-align:center;letter-spacing:.3px;text-indent:.15px;">3</div>
<div class="t" style="left:708px;top:226px;width:77px;height:14px;line-height:15px;box-sizing:border-box;overflow:hidden;font-size:11px;letter-spacing:.6px;color:#333;text-align:center;letter-spacing:.3px;text-indent:.15px;">5</div>
<div class="t" style="left:786px;top:226px;width:77px;height:14px;line-height:15px;box-sizing:border-box;overflow:hidden;font-size:11px;letter-spacing:.6px;color:#333;text-align:center;letter-spacing:.3px;text-indent:.15px;">5</div>
<div class="t" style="left:864px;top:226px;width:77px;height:14px;line-height:15px;box-sizing:border-box;overflow:hidden;font-size:11px;letter-spacing:.6px;color:#333;text-align:center;letter-spacing:.3px;text-indent:.15px;">4</div>
<div class="t" style="left:942px;top:226px;width:77px;height:14px;line-height:15px;box-sizing:border-box;overflow:hidden;font-size:11px;letter-spacing:.6px;color:#333;text-align:center;letter-spacing:.3px;text-indent:.15px;">2</div>
<div class="t" style="left:1020px;top:226px;width:77px;height:14px;line-height:15px;box-sizing:border-box;overflow:hidden;font-size:11px;letter-spacing:.6px;color:#333;text-align:center;letter-spacing:.3px;text-indent:.15px;">2</div>
<div class="t" style="left:1098px;top:226px;width:77px;height:14px;line-height:15px;box-sizing:border-box;overflow:hidden;font-size:11px;letter-spacing:.6px;color:#333;text-align:center;letter-spacing:.3px;text-indent:.15px;">3</div>
<div class="t" style="left:1176px;top:226px;width:59px;height:14px;line-height:15px;box-sizing:border-box;overflow:hidden;font-size:11px;font-weight:700;color:#222;letter-spacing:-.15px;text-align:center;">3,0</div>
<div class="t" style="left:48px;top:241px;width:47px;height:14px;line-height:15px;box-sizing:border-box;overflow:hidden;font-size:11px;letter-spacing:.6px;color:#333;text-align:center;letter-spacing:.3px;text-indent:.15px;">7</div>
<div class="t" style="left:96px;top:241px;width:143px;height:14px;line-height:15px;box-sizing:border-box;overflow:hidden;font-size:11px;letter-spacing:.6px;color:#333;text-align:left;letter-spacing:0.843px;padding-left:2px;">Teknikko</div>
<div class="t" style="left:240px;top:241px;width:77px;height:14px;line-height:15px;box-sizing:border-box;overflow:hidden;font-size:11px;letter-spacing:.6px;color:#333;text-align:center;letter-spacing:.3px;text-indent:.15px;">4</div>
<div class="t" style="left:318px;top:241px;width:77px;height:14px;line-height:15px;box-sizing:border-box;overflow:hidden;font-size:11px;letter-spacing:.6px;color:#333;text-align:center;letter-spacing:.3px;text-indent:.15px;">3</div>
<div class="t" style="left:396px;top:241px;width:77px;height:14px;line-height:15px;box-sizing:border-box;overflow:hidden;font-size:11px;letter-spacing:.6px;color:#333;text-align:center;letter-spacing:.3px;text-indent:.15px;">3</div>
<div class="t" style="left:474px;top:241px;width:77px;height:14px;line-height:15px;box-sizing:border-box;overflow:hidden;font-size:11px;letter-spacing:.6px;color:#333;text-align:center;letter-spacing:.3px;text-indent:.15px;">2</div>
<div class="t" style="left:552px;top:241px;width:77px;height:14px;line-height:15px;box-sizing:border-box;overflow:hidden;font-size:11px;letter-spacing:.6px;color:#333;text-align:center;letter-spacing:.3px;text-indent:.15px;">2</div>
<div class="t" style="left:630px;top:241px;width:77px;height:14px;line-height:15px;box-sizing:border-box;overflow:hidden;font-size:11px;letter-spacing:.6px;color:#333;text-align:center;letter-spacing:.3px;text-indent:.15px;">3</div>
<div class="t" style="left:708px;top:241px;width:77px;height:14px;line-height:15px;box-sizing:border-box;overflow:hidden;font-size:11px;letter-spacing:.6px;color:#333;text-align:center;letter-spacing:.3px;text-indent:.15px;">3</div>
<div class="t" style="left:786px;top:241px;width:77px;height:14px;line-height:15px;box-sizing:border-box;overflow:hidden;font-size:11px;letter-spacing:.6px;color:#333;text-align:center;letter-spacing:.3px;text-indent:.15px;">3</div>
<div class="t" style="left:864px;top:241px;width:77px;height:14px;line-height:15px;box-sizing:border-box;overflow:hidden;font-size:11px;letter-spacing:.6px;color:#333;text-align:center;letter-spacing:.3px;text-indent:.15px;">3</div>
<div class="t" style="left:942px;top:241px;width:77px;height:14px;line-height:15px;box-sizing:border-box;overflow:hidden;font-size:11px;letter-spacing:.6px;color:#333;text-align:center;letter-spacing:.3px;text-indent:.15px;">4</div>
<div class="t" style="left:1020px;top:241px;width:77px;height:14px;line-height:15px;box-sizing:border-box;overflow:hidden;font-size:11px;letter-spacing:.6px;color:#333;text-align:center;letter-spacing:.3px;text-indent:.15px;">4</div>
<div class="t" style="left:1098px;top:241px;width:77px;height:14px;line-height:15px;box-sizing:border-box;overflow:hidden;font-size:11px;letter-spacing:.6px;color:#333;text-align:center;letter-spacing:.3px;text-indent:.15px;">3</div>
<div class="t" style="left:1176px;top:241px;width:59px;height:14px;line-height:15px;box-sizing:border-box;overflow:hidden;font-size:11px;font-weight:700;color:#222;letter-spacing:-.15px;text-align:center;">3,1</div>
<div class="t" style="left:48px;top:256px;width:47px;height:14px;line-height:15px;box-sizing:border-box;overflow:hidden;font-size:11px;letter-spacing:.6px;color:#333;text-align:center;letter-spacing:.3px;text-indent:.15px;">8</div>
<div class="t" style="left:96px;top:256px;width:143px;height:14px;line-height:15px;box-sizing:border-box;overflow:hidden;font-size:11px;letter-spacing:.6px;color:#333;text-align:left;letter-spacing:0.762px;padding-left:2px;">Työsuojeluvaltuutettu</div>
<div class="t" style="left:240px;top:256px;width:77px;height:14px;line-height:15px;box-sizing:border-box;overflow:hidden;font-size:11px;letter-spacing:.6px;color:#333;text-align:center;letter-spacing:.3px;text-indent:.15px;">3</div>
<div class="t" style="left:318px;top:256px;width:77px;height:14px;line-height:15px;box-sizing:border-box;overflow:hidden;font-size:11px;letter-spacing:.6px;color:#333;text-align:center;letter-spacing:.3px;text-indent:.15px;">2</div>
<div class="t" style="left:396px;top:256px;width:77px;height:14px;line-height:15px;box-sizing:border-box;overflow:hidden;font-size:11px;letter-spacing:.6px;color:#333;text-align:center;letter-spacing:.3px;text-indent:.15px;">1</div>
<div class="t" style="left:474px;top:256px;width:77px;height:14px;line-height:15px;box-sizing:border-box;overflow:hidden;font-size:11px;letter-spacing:.6px;color:#333;text-align:center;letter-spacing:.3px;text-indent:.15px;">3</div>
<div class="t" style="left:552px;top:256px;width:77px;height:14px;line-height:15px;box-sizing:border-box;overflow:hidden;font-size:11px;letter-spacing:.6px;color:#333;text-align:center;letter-spacing:.3px;text-indent:.15px;">3</div>
<div class="t" style="left:630px;top:256px;width:77px;height:14px;line-height:15px;box-sizing:border-box;overflow:hidden;font-size:11px;letter-spacing:.6px;color:#333;text-align:center;letter-spacing:.3px;text-indent:.15px;">4</div>
<div class="t" style="left:708px;top:256px;width:77px;height:14px;line-height:15px;box-sizing:border-box;overflow:hidden;font-size:11px;letter-spacing:.6px;color:#333;text-align:center;letter-spacing:.3px;text-indent:.15px;">4</div>
<div class="t" style="left:786px;top:256px;width:77px;height:14px;line-height:15px;box-sizing:border-box;overflow:hidden;font-size:11px;letter-spacing:.6px;color:#333;text-align:center;letter-spacing:.3px;text-indent:.15px;">4</div>
<div class="t" style="left:864px;top:256px;width:77px;height:14px;line-height:15px;box-sizing:border-box;overflow:hidden;font-size:11px;letter-spacing:.6px;color:#333;text-align:center;letter-spacing:.3px;text-indent:.15px;">4</div>
<div class="t" style="left:942px;top:256px;width:77px;height:14px;line-height:15px;box-sizing:border-box;overflow:hidden;font-size:11px;letter-spacing:.6px;color:#333;text-align:center;letter-spacing:.3px;text-indent:.15px;">5</div>
<div class="t" style="left:1020px;top:256px;width:77px;height:14px;line-height:15px;box-sizing:border-box;overflow:hidden;font-size:11px;letter-spacing:.6px;color:#333;text-align:center;letter-spacing:.3px;text-indent:.15px;">5</div>
<div class="t" style="left:1098px;top:256px;width:77px;height:14px;line-height:15px;box-sizing:border-box;overflow:hidden;font-size:11px;letter-spacing:.6px;color:#333;text-align:center;letter-spacing:.3px;text-indent:.15px;">5</div>
<div class="t" style="left:1176px;top:256px;width:59px;height:14px;line-height:15px;box-sizing:border-box;overflow:hidden;font-size:11px;font-weight:700;color:#222;letter-spacing:-.15px;text-align:center;">3,6</div>
<div class="t" style="left:48px;top:346px;width:47px;height:14px;line-height:15px;box-sizing:border-box;overflow:hidden;font-size:11px;letter-spacing:.6px;color:#333;text-align:center;letter-spacing:.3px;text-indent:.15px;">1</div>
<div class="t" style="left:96px;top:346px;width:143px;height:14px;line-height:15px;box-sizing:border-box;overflow:hidden;font-size:11px;letter-spacing:.6px;color:#333;text-align:left;letter-spacing:0.833px;padding-left:2px;">Matti Virtanen</div>
<div class="t" style="left:240px;top:346px;width:77px;height:14px;line-height:15px;box-sizing:border-box;overflow:hidden;font-size:11px;letter-spacing:.6px;color:#333;text-align:center;letter-spacing:-0.481px;text-indent:-0.24px;">IT</div>
<div class="t" style="left:318px;top:346px;width:77px;height:14px;line-height:15px;box-sizing:border-box;overflow:hidden;font-size:11px;letter-spacing:.6px;color:#333;text-align:center;letter-spacing:0.736px;text-indent:0.37px;">Kehittäjä</div>
<div class="t" style="left:396px;top:346px;width:77px;height:14px;line-height:15px;box-sizing:border-box;overflow:hidden;font-size:11px;letter-spacing:.6px;color:#333;text-align:center;letter-spacing:.3px;text-indent:.15px;">3,1</div>
<div class="t" style="left:474px;top:346px;width:77px;height:14px;line-height:15px;box-sizing:border-box;overflow:hidden;font-size:11px;letter-spacing:.6px;color:#333;text-align:center;letter-spacing:.3px;text-indent:.15px;">3,3</div>
<div class="t" style="left:552px;top:346px;width:77px;height:14px;line-height:15px;box-sizing:border-box;overflow:hidden;font-size:11px;letter-spacing:.6px;color:#333;text-align:center;letter-spacing:.3px;text-indent:.15px;">0,2</div>
<div class="t" style="left:48px;top:361px;width:47px;height:14px;line-height:15px;box-sizing:border-box;overflow:hidden;font-size:11px;letter-spacing:.6px;color:#333;text-align:center;letter-spacing:.3px;text-indent:.15px;">2</div>
<div class="t" style="left:96px;top:361px;width:143px;height:14px;line-height:15px;box-sizing:border-box;overflow:hidden;font-size:11px;letter-spacing:.6px;color:#333;text-align:left;letter-spacing:0.496px;padding-left:2px;">Anna Korhonen</div>
<div class="t" style="left:240px;top:361px;width:77px;height:14px;line-height:15px;box-sizing:border-box;overflow:hidden;font-size:11px;letter-spacing:.6px;color:#333;text-align:center;letter-spacing:0.424px;text-indent:0.21px;">Myynti</div>
<div class="t" style="left:318px;top:361px;width:77px;height:14px;line-height:15px;box-sizing:border-box;overflow:hidden;font-size:11px;letter-spacing:.6px;color:#333;text-align:center;letter-spacing:0.216px;text-indent:0.11px;">Myyjä</div>
<div class="t" style="left:396px;top:361px;width:77px;height:14px;line-height:15px;box-sizing:border-box;overflow:hidden;font-size:11px;letter-spacing:.6px;color:#333;text-align:center;letter-spacing:.3px;text-indent:.15px;">2,8</div>
<div class="t" style="left:474px;top:361px;width:77px;height:14px;line-height:15px;box-sizing:border-box;overflow:hidden;font-size:11px;letter-spacing:.6px;color:#333;text-align:center;letter-spacing:.3px;text-indent:.15px;">2,8</div>
<div class="t" style="left:552px;top:361px;width:77px;height:14px;line-height:15px;box-sizing:border-box;overflow:hidden;font-size:11px;letter-spacing:.6px;color:#333;text-align:center;letter-spacing:.3px;text-indent:.15px;">0,0</div>
<div class="t" style="left:48px;top:376px;width:47px;height:14px;line-height:15px;box-sizing:border-box;overflow:hidden;font-size:11px;letter-spacing:.6px;color:#333;text-align:center;letter-spacing:.3px;text-indent:.15px;">3</div>
<div class="t" style="left:96px;top:376px;width:143px;height:14px;line-height:15px;box-sizing:border-box;overflow:hidden;font-size:11px;letter-spacing:.6px;color:#333;text-align:left;letter-spacing:0.673px;padding-left:2px;">Juha Mäkinen</div>
<div class="t" style="left:240px;top:376px;width:77px;height:14px;line-height:15px;box-sizing:border-box;overflow:hidden;font-size:11px;letter-spacing:.6px;color:#333;text-align:center;letter-spacing:-0.481px;text-indent:-0.24px;">IT</div>
<div class="t" style="left:318px;top:376px;width:77px;height:14px;line-height:15px;box-sizing:border-box;overflow:hidden;font-size:11px;letter-spacing:.6px;color:#333;text-align:center;letter-spacing:0.736px;text-indent:0.37px;">Kehittäjä</div>
<div class="t" style="left:396px;top:376px;width:77px;height:14px;line-height:15px;box-sizing:border-box;overflow:hidden;font-size:11px;letter-spacing:.6px;color:#333;text-align:center;letter-spacing:.3px;text-indent:.15px;">2,9</div>
<div class="t" style="left:474px;top:376px;width:77px;height:14px;line-height:15px;box-sizing:border-box;overflow:hidden;font-size:11px;letter-spacing:.6px;color:#333;text-align:center;letter-spacing:.3px;text-indent:.15px;">3,3</div>
<div class="t" style="left:552px;top:376px;width:77px;height:14px;line-height:15px;box-sizing:border-box;overflow:hidden;font-size:11px;letter-spacing:.6px;color:#333;text-align:center;letter-spacing:.3px;text-indent:.15px;">0,3</div>
<div class="t" style="left:48px;top:391px;width:47px;height:14px;line-height:15px;box-sizing:border-box;overflow:hidden;font-size:11px;letter-spacing:.6px;color:#333;text-align:center;letter-spacing:.3px;text-indent:.15px;">4</div>
<div class="t" style="left:96px;top:391px;width:143px;height:14px;line-height:15px;box-sizing:border-box;overflow:hidden;font-size:11px;letter-spacing:.6px;color:#333;text-align:left;letter-spacing:0.875px;padding-left:2px;">Maria Nieminen</div>
<div class="t" style="left:240px;top:391px;width:77px;height:14px;line-height:15px;box-sizing:border-box;overflow:hidden;font-size:11px;letter-spacing:.6px;color:#333;text-align:center;letter-spacing:-1.091px;text-indent:-0.55px;">HR</div>
<div class="t" style="left:318px;top:391px;width:77px;height:14px;line-height:15px;box-sizing:border-box;overflow:hidden;font-size:11px;letter-spacing:.6px;color:#333;text-align:center;letter-spacing:0.661px;text-indent:0.33px;">Työsuojelupä</div>
<div class="t" style="left:396px;top:391px;width:77px;height:14px;line-height:15px;box-sizing:border-box;overflow:hidden;font-size:11px;letter-spacing:.6px;color:#333;text-align:center;letter-spacing:.3px;text-indent:.15px;">3,6</div>
<div class="t" style="left:474px;top:391px;width:77px;height:14px;line-height:15px;box-sizing:border-box;overflow:hidden;font-size:11px;letter-spacing:.6px;color:#333;text-align:center;letter-spacing:.3px;text-indent:.15px;">3,7</div>
<div class="t" style="left:552px;top:391px;width:77px;height:14px;line-height:15px;box-sizing:border-box;overflow:hidden;font-size:11px;letter-spacing:.6px;color:#333;text-align:center;letter-spacing:.3px;text-indent:.15px;">0,1</div>
<div class="t" style="left:48px;top:406px;width:47px;height:14px;line-height:15px;box-sizing:border-box;overflow:hidden;font-size:11px;letter-spacing:.6px;color:#333;text-align:center;letter-spacing:.3px;text-indent:.15px;">5</div>
<div class="t" style="left:96px;top:406px;width:143px;height:14px;line-height:15px;box-sizing:border-box;overflow:hidden;font-size:11px;letter-spacing:.6px;color:#333;text-align:left;letter-spacing:0.717px;padding-left:2px;">Pekka Hämäläinen</div>
<div class="t" style="left:240px;top:406px;width:77px;height:14px;line-height:15px;box-sizing:border-box;overflow:hidden;font-size:11px;letter-spacing:.6px;color:#333;text-align:center;letter-spacing:1.074px;text-indent:0.54px;">Taloushallin</div>
<div class="t" style="left:318px;top:406px;width:77px;height:14px;line-height:15px;box-sizing:border-box;overflow:hidden;font-size:11px;letter-spacing:.6px;color:#333;text-align:center;letter-spacing:1.074px;text-indent:0.54px;">Talouspäälli</div>
<div class="t" style="left:396px;top:406px;width:77px;height:14px;line-height:15px;box-sizing:border-box;overflow:hidden;font-size:11px;letter-spacing:.6px;color:#333;text-align:center;letter-spacing:.3px;text-indent:.15px;">2,8</div>
<div class="t" style="left:474px;top:406px;width:77px;height:14px;line-height:15px;box-sizing:border-box;overflow:hidden;font-size:11px;letter-spacing:.6px;color:#333;text-align:center;letter-spacing:.3px;text-indent:.15px;">3,0</div>
<div class="t" style="left:552px;top:406px;width:77px;height:14px;line-height:15px;box-sizing:border-box;overflow:hidden;font-size:11px;letter-spacing:.6px;color:#333;text-align:center;letter-spacing:.3px;text-indent:.15px;">0,2</div>
<div class="t" style="left:48px;top:421px;width:47px;height:14px;line-height:15px;box-sizing:border-box;overflow:hidden;font-size:11px;letter-spacing:.6px;color:#333;text-align:center;letter-spacing:.3px;text-indent:.15px;">6</div>
<div class="t" style="left:96px;top:421px;width:143px;height:14px;line-height:15px;box-sizing:border-box;overflow:hidden;font-size:11px;letter-spacing:.6px;color:#333;text-align:left;letter-spacing:0.428px;padding-left:2px;">Sari Laine</div>
<div class="t" style="left:240px;top:421px;width:77px;height:14px;line-height:15px;box-sizing:border-box;overflow:hidden;font-size:11px;letter-spacing:.6px;color:#333;text-align:center;letter-spacing:0.424px;text-indent:0.21px;">Myynti</div>
<div class="t" style="left:318px;top:421px;width:77px;height:14px;line-height:15px;box-sizing:border-box;overflow:hidden;font-size:11px;letter-spacing:.6px;color:#333;text-align:center;letter-spacing:0.216px;text-indent:0.11px;">Myyjä</div>
<div class="t" style="left:396px;top:421px;width:77px;height:14px;line-height:15px;box-sizing:border-box;overflow:hidden;font-size:11px;letter-spacing:.6px;color:#333;text-align:center;letter-spacing:.3px;text-indent:.15px;">2,9</div>
<div class="t" style="left:474px;top:421px;width:77px;height:14px;line-height:15px;box-sizing:border-box;overflow:hidden;font-size:11px;letter-spacing:.6px;color:#333;text-align:center;letter-spacing:.3px;text-indent:.15px;">2,8</div>
<div class="t" style="left:552px;top:421px;width:77px;height:14px;line-height:15px;box-sizing:border-box;overflow:hidden;font-size:11px;letter-spacing:.6px;color:#333;text-align:center;letter-spacing:.3px;text-indent:.15px;">-0,1</div>
<div class="t" style="left:48px;top:436px;width:47px;height:14px;line-height:15px;box-sizing:border-box;overflow:hidden;font-size:11px;letter-spacing:.6px;color:#333;text-align:center;letter-spacing:.3px;text-indent:.15px;">7</div>
<div class="t" style="left:96px;top:436px;width:143px;height:14px;line-height:15px;box-sizing:border-box;overflow:hidden;font-size:11px;letter-spacing:.6px;color:#333;text-align:left;letter-spacing:0.8px;padding-left:2px;">Timo Heikkinen</div>
<div class="t" style="left:240px;top:436px;width:77px;height:14px;line-height:15px;box-sizing:border-box;overflow:hidden;font-size:11px;letter-spacing:.6px;color:#333;text-align:center;letter-spacing:0.47px;text-indent:0.23px;">Johto</div>
<div class="t" style="left:318px;top:436px;width:77px;height:14px;line-height:15px;box-sizing:border-box;overflow:hidden;font-size:11px;letter-spacing:.6px;color:#333;text-align:center;letter-spacing:0.569px;text-indent:0.28px;">Johtaja</div>
<div class="t" style="left:396px;top:436px;width:77px;height:14px;line-height:15px;box-sizing:border-box;overflow:hidden;font-size:11px;letter-spacing:.6px;color:#333;text-align:center;letter-spacing:.3px;text-indent:.15px;">4,0</div>
<div class="t" style="left:474px;top:436px;width:77px;height:14px;line-height:15px;box-sizing:border-box;overflow:hidden;font-size:11px;letter-spacing:.6px;color:#333;text-align:center;letter-spacing:.3px;text-indent:.15px;">4,0</div>
<div class="t" style="left:552px;top:436px;width:77px;height:14px;line-height:15px;box-sizing:border-box;overflow:hidden;font-size:11px;letter-spacing:.6px;color:#333;text-align:center;letter-spacing:.3px;text-indent:.15px;">0,0</div>
<div class="t" style="left:48px;top:451px;width:47px;height:14px;line-height:15px;box-sizing:border-box;overflow:hidden;font-size:11px;letter-spacing:.6px;color:#333;text-align:center;letter-spacing:.3px;text-indent:.15px;">8</div>
<div class="t" style="left:96px;top:451px;width:143px;height:14px;line-height:15px;box-sizing:border-box;overflow:hidden;font-size:11px;letter-spacing:.6px;color:#333;text-align:left;letter-spacing:0.488px;padding-left:2px;">Päivi Koskinen</div>
<div class="t" style="left:240px;top:451px;width:77px;height:14px;line-height:15px;box-sizing:border-box;overflow:hidden;font-size:11px;letter-spacing:.6px;color:#333;text-align:center;letter-spacing:-1.091px;text-indent:-0.55px;">HR</div>
<div class="t" style="left:318px;top:451px;width:77px;height:14px;line-height:15px;box-sizing:border-box;overflow:hidden;font-size:11px;letter-spacing:.6px;color:#333;text-align:center;letter-spacing:0.553px;text-indent:0.28px;">Työsuojeluva</div>
<div class="t" style="left:396px;top:451px;width:77px;height:14px;line-height:15px;box-sizing:border-box;overflow:hidden;font-size:11px;letter-spacing:.6px;color:#333;text-align:center;letter-spacing:.3px;text-indent:.15px;">3,5</div>
<div class="t" style="left:474px;top:451px;width:77px;height:14px;line-height:15px;box-sizing:border-box;overflow:hidden;font-size:11px;letter-spacing:.6px;color:#333;text-align:center;letter-spacing:.3px;text-indent:.15px;">3,6</div>
<div class="t" style="left:552px;top:451px;width:77px;height:14px;line-height:15px;box-sizing:border-box;overflow:hidden;font-size:11px;letter-spacing:.6px;color:#333;text-align:center;letter-spacing:.3px;text-indent:.15px;">0,1</div>
<div class="t" style="left:48px;top:466px;width:47px;height:14px;line-height:15px;box-sizing:border-box;overflow:hidden;font-size:11px;letter-spacing:.6px;color:#333;text-align:center;letter-spacing:.3px;text-indent:.15px;">9</div>
<div class="t" style="left:48px;top:481px;width:47px;height:14px;line-height:15px;box-sizing:border-box;overflow:hidden;font-size:11px;letter-spacing:.6px;color:#333;text-align:center;letter-spacing:.3px;text-indent:.15px;">10</div>
<div class="t" style="left:48px;top:496px;width:47px;height:14px;line-height:15px;box-sizing:border-box;overflow:hidden;font-size:11px;letter-spacing:.6px;color:#333;text-align:center;letter-spacing:.3px;text-indent:.15px;">11</div>
<div class="t" style="left:48px;top:511px;width:47px;height:14px;line-height:15px;box-sizing:border-box;overflow:hidden;font-size:11px;letter-spacing:.6px;color:#333;text-align:center;letter-spacing:.3px;text-indent:.15px;">12</div>
<div class="t" style="left:48px;top:526px;width:47px;height:14px;line-height:15px;box-sizing:border-box;overflow:hidden;font-size:11px;letter-spacing:.6px;color:#333;text-align:center;letter-spacing:.3px;text-indent:.15px;">13</div>
<div class="t" style="left:48px;top:541px;width:47px;height:14px;line-height:15px;box-sizing:border-box;overflow:hidden;font-size:11px;letter-spacing:.6px;color:#333;text-align:center;letter-spacing:.3px;text-indent:.15px;">14</div>
<div class="t" style="left:48px;top:556px;width:47px;height:14px;line-height:15px;box-sizing:border-box;overflow:hidden;font-size:11px;letter-spacing:.6px;color:#333;text-align:center;letter-spacing:.3px;text-indent:.15px;">15</div>
<div class="t" style="left:48px;top:571px;width:47px;height:14px;line-height:15px;box-sizing:border-box;overflow:hidden;font-size:11px;letter-spacing:.6px;color:#333;text-align:center;letter-spacing:.3px;text-indent:.15px;">16</div>
<div class="t" style="left:48px;top:586px;width:47px;height:14px;line-height:15px;box-sizing:border-box;overflow:hidden;font-size:11px;letter-spacing:.6px;color:#333;text-align:center;letter-spacing:.3px;text-indent:.15px;">17</div>
<div class="t" style="left:48px;top:601px;width:47px;height:14px;line-height:15px;box-sizing:border-box;overflow:hidden;font-size:11px;letter-spacing:.6px;color:#333;text-align:center;letter-spacing:.3px;text-indent:.15px;">18</div>
<div class="t" style="left:48px;top:616px;width:47px;height:14px;line-height:15px;box-sizing:border-box;overflow:hidden;font-size:11px;letter-spacing:.6px;color:#333;text-align:center;letter-spacing:.3px;text-indent:.15px;">19</div>
<div class="t" style="left:48px;top:631px;width:47px;height:14px;line-height:15px;box-sizing:border-box;overflow:hidden;font-size:11px;letter-spacing:.6px;color:#333;text-align:center;letter-spacing:.3px;text-indent:.15px;">20</div>
<div class="t" style="left:48px;top:646px;width:47px;height:14px;line-height:15px;box-sizing:border-box;overflow:hidden;font-size:11px;letter-spacing:.6px;color:#333;text-align:center;letter-spacing:.3px;text-indent:.15px;">21</div>
<div class="t" style="left:48px;top:661px;width:47px;height:14px;line-height:15px;box-sizing:border-box;overflow:hidden;font-size:11px;letter-spacing:.6px;color:#333;text-align:center;letter-spacing:.3px;text-indent:.15px;">22</div>
<div class="t" style="left:48px;top:676px;width:47px;height:14px;line-height:15px;box-sizing:border-box;overflow:hidden;font-size:11px;letter-spacing:.6px;color:#333;text-align:center;letter-spacing:.3px;text-indent:.15px;">23</div>
<div class="t" style="left:48px;top:691px;width:47px;height:14px;line-height:15px;box-sizing:border-box;overflow:hidden;font-size:11px;letter-spacing:.6px;color:#333;text-align:center;letter-spacing:.3px;text-indent:.15px;">24</div>
<div style="left:7px;top:0px;width:1453px;height:8px;background:#ebebeb;"></div>
<div style="left:7px;top:8px;width:1453px;height:1px;background:#adadad;"></div>
<div style="left:7px;top:9px;width:22px;height:695px;background:#efefef;"></div>
<div style="left:29px;top:0px;width:1px;height:695px;background:#b0b0b0;"></div>
<div style="left:7px;top:0px;width:1px;height:695px;background:#f8f8f8;"></div>
<div style="left:47px;top:0px;width:1px;height:8px;background:#d0d0d0;"></div>
<div style="left:95px;top:0px;width:1px;height:8px;background:#d0d0d0;"></div>
<div style="left:239px;top:0px;width:1px;height:8px;background:#d0d0d0;"></div>
<div style="left:317px;top:0px;width:1px;height:8px;background:#d0d0d0;"></div>
<div style="left:395px;top:0px;width:1px;height:8px;background:#d0d0d0;"></div>
<div style="left:473px;top:0px;width:1px;height:8px;background:#d0d0d0;"></div>
<div style="left:551px;top:0px;width:1px;height:8px;background:#d0d0d0;"></div>
<div style="left:629px;top:0px;width:1px;height:8px;background:#d0d0d0;"></div>
<div style="left:707px;top:0px;width:1px;height:8px;background:#d0d0d0;"></div>
<div style="left:785px;top:0px;width:1px;height:8px;background:#d0d0d0;"></div>
<div style="left:863px;top:0px;width:1px;height:8px;background:#d0d0d0;"></div>
<div style="left:941px;top:0px;width:1px;height:8px;background:#d0d0d0;"></div>
<div style="left:1019px;top:0px;width:1px;height:8px;background:#d0d0d0;"></div>
<div style="left:1097px;top:0px;width:1px;height:8px;background:#d0d0d0;"></div>
<div style="left:1175px;top:0px;width:1px;height:8px;background:#d0d0d0;"></div>
<div style="left:1235px;top:0px;width:1px;height:8px;background:#d0d0d0;"></div>
<div style="left:1289px;top:0px;width:1px;height:8px;background:#d0d0d0;"></div>
<div style="left:1343px;top:0px;width:1px;height:8px;background:#d0d0d0;"></div>
<div style="left:1397px;top:0px;width:1px;height:8px;background:#d0d0d0;"></div>
<div style="left:1451px;top:0px;width:1px;height:8px;background:#d0d0d0;"></div>
<div style="left:30px;top:0px;width:17px;height:8px;background:#e0e0e0;"></div>
<div class="t" style="left:31px;top:-7px;width:17px;text-align:center;font-size:14px;line-height:12px;color:#1f7244;"><span style="display:inline-block;transform:scaleX(.82)">A</span></div>
<div class="t" style="left:49px;top:-7px;width:47px;text-align:center;font-size:14px;line-height:12px;color:#555;"><span style="display:inline-block;transform:scaleX(.82)">B</span></div>
<div class="t" style="left:97px;top:-7px;width:143px;text-align:center;font-size:14px;line-height:12px;color:#555;"><span style="display:inline-block;transform:scaleX(.82)">C</span></div>
<div class="t" style="left:241px;top:-7px;width:77px;text-align:center;font-size:14px;line-height:12px;color:#555;"><span style="display:inline-block;transform:scaleX(.82)">D</span></div>
<div class="t" style="left:319px;top:-7px;width:77px;text-align:center;font-size:14px;line-height:12px;color:#555;"><span style="display:inline-block;transform:scaleX(.82)">E</span></div>
<div class="t" style="left:397px;top:-7px;width:77px;text-align:center;font-size:14px;line-height:12px;color:#555;"><span style="display:inline-block;transform:scaleX(.82)">F</span></div>
<div class="t" style="left:475px;top:-7px;width:77px;text-align:center;font-size:14px;line-height:12px;color:#555;"><span style="display:inline-block;transform:scaleX(.82)">G</span></div>
<div class="t" style="left:553px;top:-7px;width:77px;text-align:center;font-size:14px;line-height:12px;color:#555;"><span style="display:inline-block;transform:scaleX(.82)">H</span></div>
<div class="t" style="left:631px;top:-7px;width:77px;text-align:center;font-size:14px;line-height:12px;color:#555;"><span style="display:inline-block;transform:scaleX(.82)">I</span></div>
<div class="t" style="left:709px;top:-7px;width:77px;text-align:center;font-size:14px;line-height:12px;color:#555;"><span style="display:inline-block;transform:scaleX(.82)">J</span></div>
<div class="t" style="left:787px;top:-7px;width:77px;text-align:center;font-size:14px;line-height:12px;color:#555;"><span style="display:inline-block;transform:scaleX(.82)">K</span></div>
<div class="t" style="left:865px;top:-7px;width:77px;text-align:center;font-size:14px;line-height:12px;color:#555;"><span style="display:inline-block;transform:scaleX(.82)">L</span></div>
<div class="t" style="left:943px;top:-7px;width:77px;text-align:center;font-size:14px;line-height:12px;color:#555;"><span style="display:inline-block;transform:scaleX(.82)">M</span></div>
<div class="t" style="left:1021px;top:-7px;width:77px;text-align:center;font-size:14px;line-height:12px;color:#555;"><span style="display:inline-block;transform:scaleX(.82)">N</span></div>
<div class="t" style="left:1099px;top:-7px;width:77px;text-align:center;font-size:14px;line-height:12px;color:#555;"><span style="display:inline-block;transform:scaleX(.82)">O</span></div>
<div class="t" style="left:1177px;top:-7px;width:59px;text-align:center;font-size:14px;line-height:12px;color:#555;"><span style="display:inline-block;transform:scaleX(.82)">P</span></div>
<div class="t" style="left:1237px;top:-7px;width:53px;text-align:center;font-size:14px;line-height:12px;color:#555;"><span style="display:inline-block;transform:scaleX(.82)">Q</span></div>
<div class="t" style="left:1291px;top:-7px;width:53px;text-align:center;font-size:14px;line-height:12px;color:#555;"><span style="display:inline-block;transform:scaleX(.82)">R</span></div>
<div class="t" style="left:1345px;top:-7px;width:53px;text-align:center;font-size:14px;line-height:12px;color:#555;"><span style="display:inline-block;transform:scaleX(.82)">S</span></div>
<div class="t" style="left:1399px;top:-7px;width:53px;text-align:center;font-size:14px;line-height:12px;color:#555;"><span style="display:inline-block;transform:scaleX(.82)">T</span></div>
<div style="left:19px;top:-3px;width:0;height:0;border-left:7px solid transparent;border-bottom:7px solid #dcdcdc;background:none"></div>
<div style="left:7px;top:9px;width:22px;height:14px;background:#e0e0e0;"></div>
<div style="left:9px;top:23px;width:20px;height:1px;background:#ddd;background:linear-gradient(90deg,#ececec,#d4d4d4);"></div>
<div class="rn" style="top:9px;color:#1f7244;"><span>1</span></div>
<div style="left:9px;top:38px;width:20px;height:1px;background:#ddd;background:linear-gradient(90deg,#ececec,#d4d4d4);"></div>
<div class="rn" style="top:24px;color:#505050;"><span>2</span></div>
<div style="left:9px;top:75px;width:20px;height:1px;background:#ddd;background:linear-gradient(90deg,#ececec,#d4d4d4);"></div>
<div class="rn" style="top:61px;color:#505050;"><span>3</span></div>
<div style="left:9px;top:90px;width:20px;height:1px;background:#ddd;background:linear-gradient(90deg,#ececec,#d4d4d4);"></div>
<div class="rn" style="top:76px;color:#505050;"><span>4</span></div>
<div style="left:9px;top:105px;width:20px;height:1px;background:#ddd;background:linear-gradient(90deg,#ececec,#d4d4d4);"></div>
<div class="rn" style="top:91px;color:#505050;"><span>5</span></div>
<div style="left:9px;top:120px;width:20px;height:1px;background:#ddd;background:linear-gradient(90deg,#ececec,#d4d4d4);"></div>
<div class="rn" style="top:106px;color:#505050;"><span>6</span></div>
<div style="left:9px;top:150px;width:20px;height:1px;background:#ddd;background:linear-gradient(90deg,#ececec,#d4d4d4);"></div>
<div class="rn" style="top:136px;color:#505050;"><span>7</span></div>
<div style="left:9px;top:165px;width:20px;height:1px;background:#ddd;background:linear-gradient(90deg,#ececec,#d4d4d4);"></div>
<div class="rn" style="top:151px;color:#505050;"><span>8</span></div>
<div style="left:9px;top:180px;width:20px;height:1px;background:#ddd;background:linear-gradient(90deg,#ececec,#d4d4d4);"></div>
<div class="rn" style="top:166px;color:#505050;"><span>9</span></div>
<div style="left:9px;top:195px;width:20px;height:1px;background:#ddd;background:linear-gradient(90deg,#ececec,#d4d4d4);"></div>
<div class="rn" style="top:181px;color:#505050;"><span>10</span></div>
<div style="left:9px;top:210px;width:20px;height:1px;background:#ddd;background:linear-gradient(90deg,#ececec,#d4d4d4);"></div>
<div class="rn" style="top:196px;color:#505050;"><span>11</span></div>
<div style="left:9px;top:225px;width:20px;height:1px;background:#ddd;background:linear-gradient(90deg,#ececec,#d4d4d4);"></div>
<div class="rn" style="top:211px;color:#505050;"><span>12</span></div>
<div style="left:9px;top:240px;width:20px;height:1px;background:#ddd;background:linear-gradient(90deg,#ececec,#d4d4d4);"></div>
<div class="rn" style="top:226px;color:#505050;"><span>13</span></div>
<div style="left:9px;top:255px;width:20px;height:1px;background:#ddd;background:linear-gradient(90deg,#ececec,#d4d4d4);"></div>
<div class="rn" style="top:241px;color:#505050;"><span>14</span></div>
<div style="left:9px;top:270px;width:20px;height:1px;background:#ddd;background:linear-gradient(90deg,#ececec,#d4d4d4);"></div>
<div class="rn" style="top:256px;color:#505050;"><span>15</span></div>
<div style="left:9px;top:285px;width:20px;height:1px;background:#ddd;background:linear-gradient(90deg,#ececec,#d4d4d4);"></div>
<div class="rn" style="top:271px;color:#505050;"><span>16</span></div>
<div style="left:9px;top:300px;width:20px;height:1px;background:#ddd;background:linear-gradient(90deg,#ececec,#d4d4d4);"></div>
<div class="rn" style="top:286px;color:#505050;"><span>17</span></div>
<div style="left:9px;top:315px;width:20px;height:1px;background:#ddd;background:linear-gradient(90deg,#ececec,#d4d4d4);"></div>
<div class="rn" style="top:301px;color:#505050;"><span>18</span></div>
<div style="left:9px;top:345px;width:20px;height:1px;background:#ddd;background:linear-gradient(90deg,#ececec,#d4d4d4);"></div>
<div class="rn" style="top:331px;color:#505050;"><span>19</span></div>
<div style="left:9px;top:360px;width:20px;height:1px;background:#ddd;background:linear-gradient(90deg,#ececec,#d4d4d4);"></div>
<div class="rn" style="top:346px;color:#505050;"><span>20</span></div>
<div style="left:9px;top:375px;width:20px;height:1px;background:#ddd;background:linear-gradient(90deg,#ececec,#d4d4d4);"></div>
<div class="rn" style="top:361px;color:#505050;"><span>21</span></div>
<div style="left:9px;top:390px;width:20px;height:1px;background:#ddd;background:linear-gradient(90deg,#ececec,#d4d4d4);"></div>
<div class="rn" style="top:376px;color:#505050;"><span>22</span></div>
<div style="left:9px;top:405px;width:20px;height:1px;background:#ddd;background:linear-gradient(90deg,#ececec,#d4d4d4);"></div>
<div class="rn" style="top:391px;color:#505050;"><span>23</span></div>
<div style="left:9px;top:420px;width:20px;height:1px;background:#ddd;background:linear-gradient(90deg,#ececec,#d4d4d4);"></div>
<div class="rn" style="top:406px;color:#505050;"><span>24</span></div>
<div style="left:9px;top:435px;width:20px;height:1px;background:#ddd;background:linear-gradient(90deg,#ececec,#d4d4d4);"></div>
<div class="rn" style="top:421px;color:#505050;"><span>25</span></div>
<div style="left:9px;top:450px;width:20px;height:1px;background:#ddd;background:linear-gradient(90deg,#ececec,#d4d4d4);"></div>
<div class="rn" style="top:436px;color:#505050;"><span>26</span></div>
<div style="left:9px;top:465px;width:20px;height:1px;background:#ddd;background:linear-gradient(90deg,#ececec,#d4d4d4);"></div>
<div class="rn" style="top:451px;color:#505050;"><span>27</span></div>
<div style="left:9px;top:480px;width:20px;height:1px;background:#ddd;background:linear-gradient(90deg,#ececec,#d4d4d4);"></div>
<div class="rn" style="top:466px;color:#505050;"><span>28</span></div>
<div style="left:9px;top:495px;width:20px;height:1px;background:#ddd;background:linear-gradient(90deg,#ececec,#d4d4d4);"></div>
<div class="rn" style="top:481px;color:#505050;"><span>29</span></div>
<div style="left:9px;top:510px;width:20px;height:1px;background:#ddd;background:linear-gradient(90deg,#ececec,#d4d4d4);"></div>
<div class="rn" style="top:496px;color:#505050;"><span>30</span></div>
<div style="left:9px;top:525px;width:20px;height:1px;background:#ddd;background:linear-gradient(90deg,#ececec,#d4d4d4);"></div>
<div class="rn" style="top:511px;color:#505050;"><span>31</span></div>
<div style="left:9px;top:540px;width:20px;height:1px;background:#ddd;background:linear-gradient(90deg,#ececec,#d4d4d4);"></div>
<div class="rn" style="top:526px;color:#505050;"><span>32</span></div>
<div style="left:9px;top:555px;width:20px;height:1px;background:#ddd;background:linear-gradient(90deg,#ececec,#d4d4d4);"></div>
<div class="rn" style="top:541px;color:#505050;"><span>33</span></div>
<div style="left:9px;top:570px;width:20px;height:1px;background:#ddd;background:linear-gradient(90deg,#ececec,#d4d4d4);"></div>
<div class="rn" style="top:556px;color:#505050;"><span>34</span></div>
<div style="left:9px;top:585px;width:20px;height:1px;background:#ddd;background:linear-gradient(90deg,#ececec,#d4d4d4);"></div>
<div class="rn" style="top:571px;color:#505050;"><span>35</span></div>
<div style="left:9px;top:600px;width:20px;height:1px;background:#ddd;background:linear-gradient(90deg,#ececec,#d4d4d4);"></div>
<div class="rn" style="top:586px;color:#505050;"><span>36</span></div>
<div style="left:9px;top:615px;width:20px;height:1px;background:#ddd;background:linear-gradient(90deg,#ececec,#d4d4d4);"></div>
<div class="rn" style="top:601px;color:#505050;"><span>37</span></div>
<div style="left:9px;top:630px;width:20px;height:1px;background:#ddd;background:linear-gradient(90deg,#ececec,#d4d4d4);"></div>
<div class="rn" style="top:616px;color:#505050;"><span>38</span></div>
<div style="left:9px;top:645px;width:20px;height:1px;background:#ddd;background:linear-gradient(90deg,#ececec,#d4d4d4);"></div>
<div class="rn" style="top:631px;color:#505050;"><span>39</span></div>
<div style="left:9px;top:660px;width:20px;height:1px;background:#ddd;background:linear-gradient(90deg,#ececec,#d4d4d4);"></div>
<div class="rn" style="top:646px;color:#505050;"><span>40</span></div>
<div style="left:9px;top:675px;width:20px;height:1px;background:#ddd;background:linear-gradient(90deg,#ececec,#d4d4d4);"></div>
<div class="rn" style="top:661px;color:#505050;"><span>41</span></div>
<div style="left:9px;top:690px;width:20px;height:1px;background:#ddd;background:linear-gradient(90deg,#ececec,#d4d4d4);"></div>
<div class="rn" style="top:676px;color:#505050;"><span>42</span></div>
<div style="left:9px;top:705px;width:20px;height:1px;background:#ddd;background:linear-gradient(90deg,#ececec,#d4d4d4);"></div>
<div class="rn" style="top:691px;color:#505050;"><span>43</span></div>
<div style="left:95px;top:0px;width:2px;height:695px;background:#9e9e9e;"></div>
<div style="left:7px;top:150px;width:1453px;height:2px;background:#9e9e9e;"></div>
<div style="left:27px;top:6px;width:23px;height:3px;background:#1f7244;"></div>
<div style="left:27px;top:6px;width:3px;height:20px;background:#1f7244;"></div>
<div style="left:47px;top:6px;width:3px;height:12px;background:#1f7244;"></div>
<div style="left:27px;top:23px;width:15px;height:3px;background:#1f7244;"></div>
<div style="left:42px;top:18px;width:9px;height:9px;background:#fff;"></div>
<div style="left:43px;top:19px;width:8px;height:8px;background:#1f7244;"></div>
<div style="left:27px;top:6px;width:1px;height:1px;background:#efefef;"></div>
<div style="left:0px;top:0px;width:7px;height:695px;background:#000;"></div>
</div></body></html>
